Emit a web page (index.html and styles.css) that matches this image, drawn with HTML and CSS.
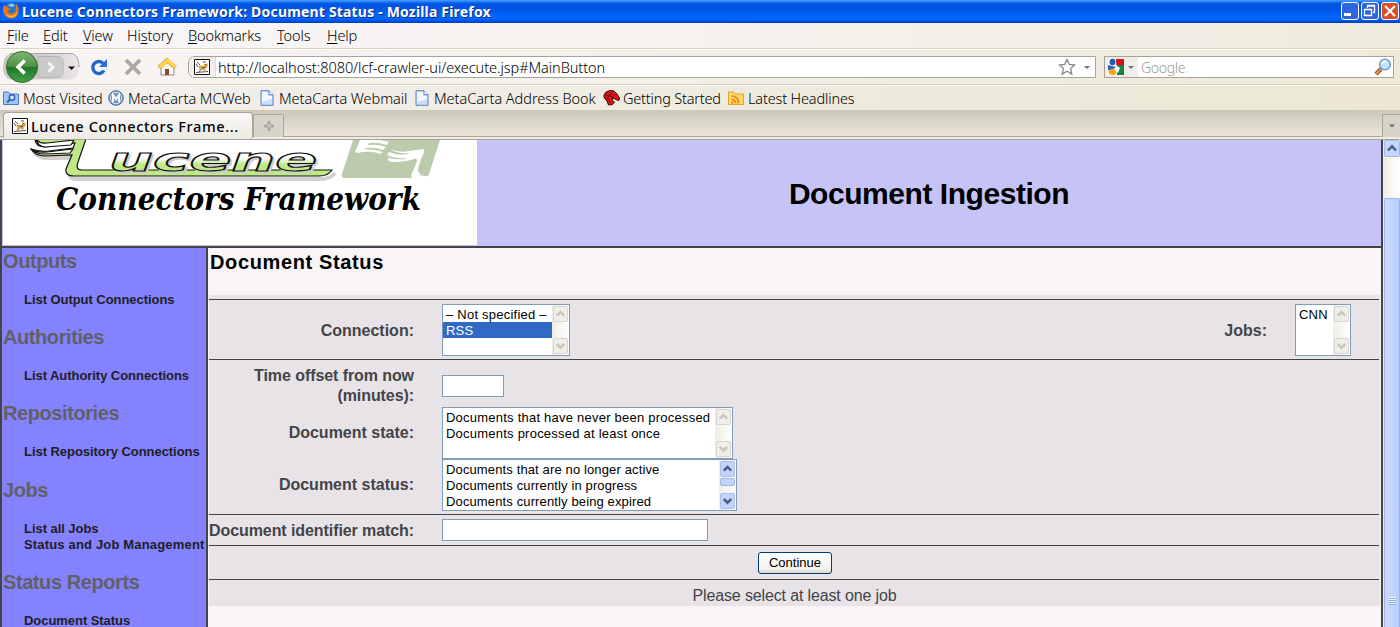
FILE: index.html
```html
<!DOCTYPE html>
<html lang="en">
<head>
<meta charset="utf-8">
<title>Lucene Connectors Framework: Document Status</title>
<link rel="stylesheet" href="styles.css">
</head>
<body>
<svg width="0" height="0" class="defs">
  <defs>
    <symbol id="cat" viewBox="0 0 16 16"><path d="M.5.5h15v15H.5z" fill="#fff" stroke="#111"/><path d="M3 3l3 3M2 5l2 3M9 3h3M2 13.500l12-1M5 13l2-2" fill="none" stroke="#555"/><path d="M4 7l3-.5 3 .5 0-3 1 1h2l1-1-.5 4-2 1.500 0 3-2-1.500-2 0-3 2 1-3z" fill="#dba657"/><path d="M8 9l3-1M11 5.500h1" stroke="#5a4020"/></symbol>
    <symbol id="page" viewBox="0 0 14 16"><path d="M1 .7h8l4 4v10.600H1z" fill="#c9dffc" stroke="#5c82c4"/><path d="M2 2h6v4h4v3L2 12z" fill="#f2f8ff"/><path d="M9 .7v4h4" fill="#fff" stroke="#5c82c4"/></symbol>
    <symbol id="up" viewBox="1.500 1.500 13 13"><path d="M4.300 9.700L8 6l3.700 3.700" fill="none" stroke="currentColor" stroke-width="2.500"/></symbol>
    <symbol id="down" viewBox="1.500 1.500 13 13"><path d="M4.300 6L8 9.700 11.700 6" fill="none" stroke="currentColor" stroke-width="2.500"/></symbol>
  </defs>
</svg>

<header class="titlebar">
  <svg class="fox" width="18" height="18" viewBox="0 0 18 18"><circle cx="9" cy="8.500" r="7.500" fill="#2874c8"/><path d="M6 3q4-3 7 0l-2 2-3 0z" fill="#79c3f0"/><path d="M1.500 3Q0 8 2 12q3 5 8 4.500 6-1 6.500-7Q17 4 14 1.500q1 3-.5 4 1 5-3 6Q7 12 5 9l3-1 1-1.500-3-.5-1-2-2 .5z" fill="#e9731a"/><path d="M16 5q1 6-4 8-4 2-8-1 3 5 8 3 5-3 4-10z" fill="#f9c22c"/></svg>
  <h1 class="wintitle">Lucene Connectors Framework: Document Status - Mozilla Firefox</h1>
  <div class="winbtns">
    <svg width="18" height="18" viewBox="0 0 18 18"><rect x=".5" y=".5" width="17" height="17" rx="2.500" fill="#2f64e0" stroke="#fff"/><path d="M3 12.500h7" stroke="#fff" stroke-width="3"/></svg>
    <svg width="18" height="18" viewBox="0 0 18 18"><rect x=".5" y=".5" width="17" height="17" rx="2.500" fill="#2f64e0" stroke="#fff"/><path d="M3.500 7.500h7v6h-7zM3 7.500h8M6.500 6V3.500h7v7H12M6 4h8" fill="none" stroke="#fff" stroke-width="1.300"/></svg>
    <svg width="18" height="18" viewBox="0 0 18 18"><rect x=".5" y=".5" width="17" height="17" rx="2.500" fill="#dd4d28" stroke="#fff"/><path d="M4 4l10 10M14 4L4 14" stroke="#fff" stroke-width="2.200"/></svg>
  </div>
</header>

<nav class="menubar">
  <span class="m1"><u>F</u>ile</span><span class="m2"><u>E</u>dit</span><span class="m3"><u>V</u>iew</span><span class="m4">Hi<u>s</u>tory</span><span class="m5"><u>B</u>ookmarks</span><span class="m6"><u>T</u>ools</span><span class="m7"><u>H</u>elp</span>
</nav>

<div class="navbar">
  <svg class="navicons" width="188" height="34" viewBox="0 50 188 34">
    <defs><linearGradient id="g" x1="0" y1="0" x2="0" y2="1"><stop offset="0" stop-color="#83b573"/><stop offset=".48" stop-color="#4c9245"/><stop offset=".52" stop-color="#1f7529"/><stop offset="1" stop-color="#45a54a"/></linearGradient>
    <linearGradient id="k" x1="0" y1="0" x2="1" y2="0"><stop offset="0" stop-color="#c8c6c4"/><stop offset=".6" stop-color="#d3d1cf"/><stop offset="1" stop-color="#ebe8e7"/></linearGradient></defs>
    <path d="M10 53.500h62q7 2 7 13.500t-7 12.500H10Q3 77 3 67t7-13.500z" fill="url(#k)"/>
    <path d="M10 53.500h62q7 2 7 13.500" fill="none" stroke="#aaa7a4"/>
    <path d="M38 56.500h20q5 1 5 5v10q0 5-5 6H38z" fill="#cbc9c9" stroke="#b5b3b3"/>
    <path d="M48.500 62.500l4.500 4.700-4.500 4.700" fill="none" stroke="#f5f3f3" stroke-width="3"/>
    <path d="M68 66.500h7l-3.500 3.500z" fill="#111"/>
    <circle cx="22" cy="67" r="15.500" fill="url(#g)" stroke="#356b35"/>
    <path d="M24.700 60.500L18 67l6.700 6.500" fill="none" stroke="#fff" stroke-width="3.600"/>
    <path d="M104 70.500a6 6 0 1 1-.7-7" fill="none" stroke="#2364cf" stroke-width="3.300"/><path d="M107 59v8h-8z" fill="#2a70dc"/>
    <path d="M126 60l14 14M140 60l-14 14" stroke="#aaa8a5" stroke-width="3.800"/>
    <path d="M161 67v8h13v-8l-6.500-5z" fill="#fdfdfd" stroke="#88898c"/><path d="M159 67.500l8-7 8.500 7" fill="none" stroke="#d9981f" stroke-width="4.200"/><path d="M159.500 67l8-6.500 8 6.500" fill="none" stroke="#ffd553" stroke-width="3"/><path d="M165 69h4v6h-4z" fill="#8a4a27"/>
  </svg>
  <div class="urlbar">
    <div class="siteicon"><svg width="16" height="16"><use href="#cat"/></svg></div>
    <span class="url">http://localhost:8080/lcf-crawler-ui/execute.jsp#MainButton</span>
    <svg class="star" width="36" height="18" viewBox="0 0 36 18"><path d="M9 1.500l2.300 5 5.300.5-4 3.600 1.200 5.500L9 13.300l-4.800 2.800 1.200-5.500-4-3.600 5.300-.5z" fill="#fff" stroke="#888" stroke-width="1.300"/><path d="M26 8h6l-3 3z" fill="#77756f"/></svg>
  </div>
  <div class="search">
    <div class="engine"><svg width="30" height="18" viewBox="0 0 30 18"><path d="M8 1h9v16H8z" fill="#118542"/><path d="M8 1h9v6H8z" fill="#e00b13"/><path d="M1 1h8l1 16H1z" fill="#fff"/><ellipse cx="5.500" cy="4" rx="3" ry="3.300" fill="#2459b8"/><path d="M1 7l4 1 4 1-4 3-4 0z" fill="#2b60be"/><ellipse cx="5.500" cy="14" rx="4" ry="3" fill="#f4a81d"/><path d="M9 7l4 3-2 5-3-3z" fill="#fff"/><path d="M21 8h6l-3 3z" fill="#77756f"/></svg></div>
    <span class="google">Google</span>
    <svg width="18" height="18" viewBox="0 0 18 18"><path d="M7 11l-5 5" stroke="#7c4730" stroke-width="4"/><path d="M7 11l-5 5" stroke="#ed933b" stroke-width="2"/><circle cx="11" cy="6.500" r="5.300" fill="#bfe4fb" stroke="#7096ce" stroke-width="1.500"/><path d="M8 6q1-3 4-3" fill="none" stroke="#fff" stroke-width="2"/></svg>
  </div>
</div>

<nav class="bookmarks">
  <svg width="16" height="16" viewBox="0 0 16 16"><path d="M.5 2h5l1.500 2h8.500v10.500H.5z" fill="#9dc5f6" stroke="#4a7dc8"/><circle cx="9" cy="7.500" r="2.700" fill="#cfe4ff" stroke="#2c5fb8" stroke-width="1.400"/><path d="M7 9.500l-3 3" stroke="#2c5fb8" stroke-width="2"/></svg><span class="b1">Most Visited</span>
  <svg width="16" height="16" viewBox="0 0 16 16"><circle cx="8" cy="8" r="7.300" fill="#7294bd" stroke="#546e8f"/><circle cx="8" cy="8" r="5.800" fill="none" stroke="#dce7f2"/><path d="M5 12V5l3 4 3-4v7" fill="none" stroke="#fff" stroke-width="2"/></svg><span class="b2">MetaCarta MCWeb</span>
  <svg width="14" height="16"><use href="#page"/></svg><span class="b3">MetaCarta Webmail</span>
  <svg width="14" height="16"><use href="#page"/></svg><span class="b4">MetaCarta Address Book</span>
  <svg width="17" height="16" viewBox="0 0 17 16"><path d="M1 5l2-3 4-1.500 4 .5 3 3 2.500 4-.5 2.500-2-.5-3-1.500-2 0 .5 2 2 1.500-2 2.500-4 .5-1.500-4-2-2-1-2z" fill="#dc1418" stroke="#3d0808"/><path d="M3 5l3 1-2 3M8 3l-1 3 3 1M6 9l1 4M11 5h1.500" fill="none" stroke="#630a0c"/></svg><span class="b5">Getting Started</span>
  <svg width="16" height="16" viewBox="0 0 16 16"><path d="M.5 2h5l1.500 2h8.500v10.500H.5z" fill="#ffd965" stroke="#dfa42b"/><path d="M3.500 6q7 0 7 7.500M3.500 9.300q4 0 4 4" fill="none" stroke="#ef861f" stroke-width="1.700"/><circle cx="4.300" cy="12.500" r="1.200" fill="#ef861f"/></svg><span class="b6">Latest Headlines</span>
</nav>

<div class="tabs">
  <div class="tab"><svg width="16" height="16"><use href="#cat"/></svg><span>Lucene Connectors Frame...</span></div>
  <div class="newtab"><svg width="10" height="10" viewBox="0 0 10 10"><path d="M5 .5v9M.5 5h9" stroke="#8b8783" stroke-width="2.600"/><path d="M5 1.500v7M1.500 5h7" stroke="#e4ded4" stroke-width="1"/></svg></div>
  <div class="alltabs"><svg width="6" height="4" viewBox="0 0 6 4"><path d="M0 .5h6l-3 3z" fill="#6d6b66"/></svg></div>
</div>

<div class="viewport">
  <div class="page">
    <div class="banner">
      <svg class="logo" width="474" height="105" viewBox="3 140 474 105">
        <defs><linearGradient id="tube" x1="0" y1="0" x2="0" y2="1"><stop offset=".45" stop-color="#fff"/><stop offset=".62" stop-color="#bee986"/></linearGradient></defs>
        <path d="M353 140h87l-11 34q-1 3-4 2l-6-1q-5 0-6 3l-69 0q-3-1-2-4z" fill="#bccbac"/>
        <path d="M360 140l-5 12 4 1 3-1q12-1 18 2l3-2q-9-3-19-3l1-1q11-1 18 2l3-3q-8-3-18-2l1-2q10-1 18 2l2-3q-6-2-13-2zM391 149q8 4 18 2l15-2q1 3-3 10l-3 10q0 4 3 5l-9 4q-2-2 1-7l4-10q0-4-3-2-8 3-20 3-7 0-6-4 9 2 18 1l1-1q-11 1-20-3l2-3q9 4 19 2l1-1q-13 1-18-4z" fill="#fff"/>
        <path d="M34 152q4 6 13 6l25 0-3 13q-1 8 8 8h244q10 0 14-6" fill="none" stroke="#d3d0d2" stroke-width="4"/>
        <path d="M35 140q1 7 10 7l30-4-2 5-24 3q-7 1-18-2 4 7 14 7l27-1-6 14q-1 7 8 7h245q9 0 13-6H82q-7 0-4-8l9-26H75z" fill="#bee986" stroke="#111" stroke-width="1.200"/>
        <path d="M36 139q3 5 11 4l27-3-3 5-26 2q-8-1-9-8zM31 149q5 4 16 3l26-3-3 4-25 1q-10 0-14-5z" fill="#fff" stroke="#111" stroke-width="1.200"/>
        <text class="script shade" x="111" y="173" textLength="208" lengthAdjust="spacingAndGlyphs">ucene</text>
        <text class="script" x="109" y="171" textLength="208" lengthAdjust="spacingAndGlyphs">ucene</text>
        <text class="framework" x="56" y="210" textLength="365" lengthAdjust="spacingAndGlyphs">Connectors Framework</text>
      </svg>
      <h2 class="apptitle">Document Ingestion</h2>
    </div>
    <div class="body">
      <aside class="side">
        <h3>Outputs</h3>
        <a>List Output Connections</a>
        <h3>Authorities</h3>
        <a>List Authority Connections</a>
        <h3>Repositories</h3>
        <a>List Repository Connections</a>
        <h3 class="jobs">Jobs</h3>
        <a>List all Jobs</a>
        <a class="wide">Status and Job Management</a>
        <h3>Status Reports</h3>
        <a>Document Status</a>
      </aside>
      <main class="main">
        <h3 class="heading">Document Status</h3>
        <div class="form">
          <div class="row r1">
            <label>Connection:</label>
            <div class="list conn">
              <div class="opts"><span>– Not specified –</span><span class="sel">RSS</span></div>
              <div class="sb off"><svg width="15" height="16"><use href="#up"/></svg><svg width="15" height="16"><use href="#down"/></svg></div>
            </div>
            <label class="joblabel">Jobs:</label>
            <div class="list joblist">
              <div class="opts"><span>CNN</span></div>
              <div class="sb off"><svg width="15" height="16"><use href="#up"/></svg><svg width="15" height="16"><use href="#down"/></svg></div>
            </div>
          </div>
          <div class="row r2">
            <label class="l2">Time offset from now<br>(minutes):</label>
            <div class="input short"></div>
            <label>Document state:</label>
            <div class="list state">
              <div class="opts"><span>Documents that have never been processed</span><span>Documents processed at least once</span></div>
              <div class="sb off"><svg width="15" height="16"><use href="#up"/></svg><svg width="15" height="16"><use href="#down"/></svg></div>
            </div>
            <label>Document status:</label>
            <div class="list status">
              <div class="opts"><span>Documents that are no longer active</span><span>Documents currently in progress</span><span>Documents currently being expired</span></div>
              <div class="sb on"><svg width="15" height="16"><use href="#up"/></svg><i class="mini"></i><svg width="15" height="16"><use href="#down"/></svg></div>
            </div>
          </div>
          <div class="row r3"><label class="l5">Document identifier match:</label><div class="input long"></div></div>
          <div class="row r4"><button class="go">Continue</button></div>
          <div class="row r5"><span>Please select at least one job</span></div>
        </div>
      </main>
    </div>
  </div>
  <div class="scroll">
    <div class="sbtn"><svg width="14" height="15"><use href="#up"/></svg></div>
    <div class="thumb"><i class="grip"></i></div>
  </div>
</div>
</body>
</html>
```
FILE: styles.css
```css
* { box-sizing: border-box; }
body { margin: 0; width: 1400px; height: 627px; overflow: hidden; display: flex; flex-direction: column; background: #f8f4f8; font-family: "Noto Sans", sans-serif; font-size: 14px; color: #000; white-space: nowrap; }
h1, h2, h3 { margin: 0; }
svg { display: block; flex: none; }
.defs { position: absolute; }

.titlebar { height: 23px; flex: none; display: flex; align-items: center; padding: 0 1px 0 2px; background: linear-gradient(#3d95ff 0, #3d95ff 1px, #1673f2 2px, #0353e1 4px, #0058e8 11px, #0065fd 15px, #0066ff 19px, #0046cf 22px, #0038ba 23px); }
.fox { margin-top: -1px; }
.wintitle { margin-left: 2px; font: bold 14px/22px "Noto Sans", sans-serif; color: #fff; text-shadow: 1px 1px 0 #0b2a7b; letter-spacing: .18px; flex: 1; }
.winbtns { display: flex; gap: 2px; margin-top: -1px; }

.menubar { height: 27px; flex: none; display: flex; padding-left: 7px; line-height: 25px; background: linear-gradient(90deg, #f8f6f8, #f6f3ef 50%, #eeebdd); border-bottom: 1px solid #fff; box-shadow: inset 0 -1px #ddd3bb; font-size: 14.500px; font-weight: 300; letter-spacing: -.1px; }
.menubar u { text-underline-offset: 2px; }
.m1 { width: 36px; } .m2 { width: 40px; } .m3 { width: 44px; } .m4 { width: 61px; } .m5 { width: 89px; } .m6 { width: 50px; }

.navbar { height: 36px; flex: none; display: flex; align-items: center; background: linear-gradient(90deg, #f8f5f4, #f0efe8 50%, #efead8); border-bottom: 1px solid #fff; box-shadow: inset 0 -1px #d9cdb2; }
.navicons { margin-top: -2px; }
.urlbar { width: 908px; height: 22px; margin: -1px 8px 0 0; display: flex; align-items: center; border: 1px solid #a6a296; border-radius: 7px 0 0 7px; background: #fff; overflow: hidden; }
.siteicon { width: 27px; height: 20px; display: flex; align-items: center; padding-left: 5px; background: #f3efed; border-right: 1px solid #dfdcd6; }
.url { flex: 1; padding-left: 2px; font-size: 14.500px; font-weight: 300; letter-spacing: -.06px; }
.star { margin-right: 1px; }
.search { width: 290px; height: 22px; margin-top: -1px; display: flex; align-items: center; border: 1px solid #a6a296; background: #fff; padding-right: 1px; }
.engine { width: 33px; height: 20px; padding: 1px 0 0 2px; background: #f0eeea; }
.google { flex: 1; padding-left: 3px; color: #9d998d; font-size: 14px; font-weight: 300; letter-spacing: -.3px; }

.bookmarks { height: 24px; flex: none; display: flex; align-items: center; padding-left: 3px; background: linear-gradient(90deg, #f3f0ef, #eeebdf 50%, #ece7d5); font-size: 14.500px; font-weight: 300; }
.bookmarks span { margin-left: 4px; height: 24px; line-height: 24px; letter-spacing: -.05px; }
.b1 { width: 85px; } .b2 { width: 132px; } .b3 { width: 136px; } .b4 { width: 169px; } .b5 { width: 105px; }
.bookmarks .b3, .bookmarks .b4 { margin-left: 5px; }
.bookmarks .b5 { margin-left: 3px; letter-spacing: -.2px; }
.bookmarks .b6 { letter-spacing: -.15px; }

.tabs { height: 30px; flex: none; display: flex; align-items: flex-end; padding-left: 3px; background: linear-gradient(#cbc7b9 0, #d8d3c7 9px, #ebe4d8 26px, #ada899 26px, #ada899 27px, #eeebe5 27px, #eeebe5 29px, #a8a395 29px); }
.tab { width: 250px; height: 26px; margin-bottom: 2px; padding: 1px 0 0 8px; display: flex; align-items: center; background: linear-gradient(#faf8f7, #eeebe5); border: 1px solid #a8a395; border-bottom: 0; border-radius: 4px 4px 0 0; font: 500 14.500px "Noto Sans", sans-serif; letter-spacing: .6px; }
.tab span { margin-left: 3px; }
.newtab { width: 31px; height: 23px; margin: 0 0 3px; display: flex; align-items: center; justify-content: center; border: 1px solid #aaa698; border-bottom: 0; border-radius: 2px 2px 0 0; background: #d8d4ca; }
.alltabs { width: 18px; height: 23px; margin: 0 0 3px auto; display: flex; align-items: center; justify-content: center; border: 1px solid #aaa698; border-width: 1px 0 0 1px; background: #d7d3c9; }

.viewport { flex: 1; display: flex; font-family: "Liberation Sans", sans-serif; }
.page { width: 1383px; border: solid #444447; border-width: 0 2px; display: flex; flex-direction: column; }
.banner { height: 108px; flex: none; display: flex; padding-left: 1px; background: #c6c3f6; border-bottom: 2px solid #444447; }
.logo { background: #fff; }
.script { font: italic bold 32px "DejaVu Sans", sans-serif; fill: url(#tube); stroke: #111; stroke-width: 1.100px; }
.shade { fill: #cfccce; stroke: #cfccce; }
.framework { font: italic bold 31px "DejaVu Serif", serif; }
.apptitle { flex: 1; text-align: center; font-size: 30px; line-height: 107px; letter-spacing: -.45px; }

.body { flex: 1; display: flex; }
.side { width: 206px; padding: 1px 0 0 1px; background: #8482ff; border-right: 2px solid #444447; }
.side h3 { height: 24px; margin-bottom: 19px; line-height: 24px; font-size: 20px; letter-spacing: -.42px; color: #606067; }
.side a { display: block; height: 16px; line-height: 16px; padding-left: 21px; font-size: 13px; font-weight: bold; letter-spacing: -.05px; color: #202024; }
.side .wide { letter-spacing: .17px; }
.side a + h3 { margin-top: 17px; }
.side a + .jobs { margin-top: 18px; }
.main { flex: 1; padding: 0 0 0 1px; background: #f8f4f8; }
.heading { height: 47px; padding: 1px 0 0 1px; line-height: 26px; font-size: 20px; letter-spacing: .63px; }
.form { width: 1171px; height: 311px; padding-top: 4px; background: #e7e3e7; color: #444447; }
.row { width: 1170px; border-top: 1px solid #444447; }
label { width: 206px; padding-right: 1px; text-align: right; font-size: 16px; line-height: 20px; font-weight: bold; }
.r1 { height: 60px; display: flex; padding-top: 4px; }
.r1 label { margin: 17px 27px 0 0; }
.r1 .joblabel { width: 60px; margin-left: auto; }
.r1 .joblist { margin-right: 28px; }
.r2 { height: 155px; display: grid; grid-template: 47px 52px 52px / 206px auto; column-gap: 27px; align-items: center; justify-content: start; }
.r2 .l2 { margin-top: 4px; letter-spacing: -.08px; }
.r2 .input { margin-top: 4px; }
.r3 { height: 31px; display: flex; align-items: center; gap: 27px; }
.r3 .l5 { padding: 1px 0 0; text-align: left; letter-spacing: -.08px; }
.r4 { height: 34px; display: flex; justify-content: center; align-items: center; padding-left: 2px; }
.r5 { height: 27px; line-height: 31px; text-align: center; font-size: 16px; letter-spacing: -.14px; padding-left: 1px; }
.input { height: 22px; background: #fff; border: 1px solid #7f9db9; }
.short { width: 62px; } .long { width: 266px; }
.list { height: 52px; display: flex; border: 1px solid #7f9db9; background: #fff; color: #000; font-size: 13px; }
.conn { width: 128px; } .joblist { width: 56px; } .state { width: 291px; } .status { width: 295px; }
.conn, .state { letter-spacing: .23px; }
.joblist { letter-spacing: .2px; }
.status { letter-spacing: .13px; }
.opts { flex: 1; padding-top: 1px; }
.opts span { display: block; height: 16px; line-height: 17px; padding-left: 3px; }
.opts .sel { background: #316ac5; color: #fff; }
.sb { width: 17px; padding: 1px; display: flex; flex-direction: column; justify-content: space-between; background: linear-gradient(90deg, #eeede5, #fff); }
.sb svg { border: 1px solid #d8d6ca; border-radius: 2px; background: #efeee8; color: #c8c6bd; }
.sb.on svg { border-color: #a9bfea; background: #c3d3fd; color: #4d6185; }
.mini { height: 8px; margin-bottom: 7px; border: 1px solid #9db8ef; border-radius: 2px; background: #c3d3fd; }
.go { width: 74px; height: 22px; padding: 0; border: 1px solid #003c74; border-radius: 3px; background: linear-gradient(#fff, #f3f1ec 80%, #dcd7cb); color: #000; font: 13px "Liberation Sans", sans-serif; }

.scroll { width: 17px; padding-left: 1px; display: flex; flex-direction: column; background: linear-gradient(90deg, #eeede5, #fff); }
.sbtn { height: 17px; border: 1px solid #9fb8ea; border-radius: 2px; background: #c5d6fd; color: #4d6185; }
.thumb { margin-top: 41px; flex: 1; border: 1px solid #98b5ee; border-bottom: 0; border-radius: 2px 2px 0 0; background: linear-gradient(90deg, #cbd9fe, #b9cffc); padding: 398px 0 0 4px; }
.grip { display: block; width: 7px; height: 8px; background: repeating-linear-gradient(#eef4fe 0 1px, #8cb0f8 1px 2px); }
```
